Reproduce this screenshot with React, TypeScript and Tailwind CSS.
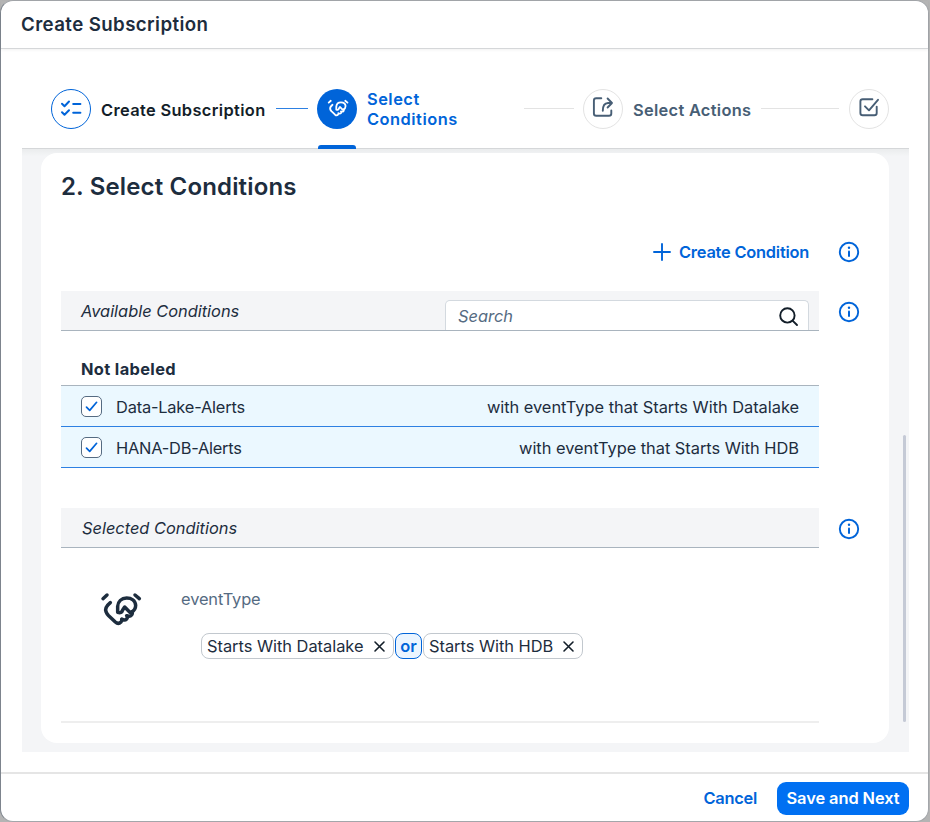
import type { ReactNode } from "react";

function Handshake({ size, stroke }: { size: number; stroke: number }) {
  return (
    <svg width={size} height={size} viewBox="0 0 180 180" fill="none" stroke="currentColor" strokeWidth={stroke} strokeLinecap="round" strokeLinejoin="round">
      <path d="M39 56 51 45M135 45 148 56" />
      <path d="M61 68C50 77 45 87 48 95Q50 101 56 107L76 126Q85 134 93 126Q97 122 95 117Q104 123 110 117Q114 112 110 107Q120 111 125 105Q128 101 126 95" />
      <path d="M124 97Q137 90 137 76C136 61 124 54 110 54C94 54 84 65 83 79V97Q95 101 98 90L104 81L121 98" />
    </svg>
  );
}

function ListIcon() {
  return (
    <svg width="22" height="18" viewBox="0 0 22 18" fill="none" stroke="currentColor" strokeWidth="2" strokeLinecap="round" strokeLinejoin="round">
      <path d="M2 4.7 4.5 7.2 9 2.5M2 13.3l2.5 2.5L9 11.2" />
      <path d="M13.2 5H20.4M13.2 13.8H20.4" />
    </svg>
  );
}

function ShareIcon() {
  return (
    <svg width="22" height="22" viewBox="0 0 22 22" fill="none" stroke="currentColor" strokeWidth="1.9" strokeLinecap="round" strokeLinejoin="round">
      <path d="M9.3 2.2H4.2Q1.9 2.2 1.9 4.5V17.4Q1.9 19.7 4.2 19.7H17Q19.3 19.7 19.3 17.4V14.4" />
      <path d="M15.6 2.5 20 7l-4.4 4.5M20 7H16Q10.8 7.3 10.8 14.8" />
    </svg>
  );
}

function CompleteIcon() {
  return (
    <svg width="22" height="22" viewBox="0 0 22 22" fill="none" stroke="currentColor" strokeWidth="1.9" strokeLinecap="round" strokeLinejoin="round">
      <path d="M14.4 3.3H4.7Q2.4 3.3 2.4 5.6V16.9Q2.4 19.2 4.7 19.2H16.4Q18.7 19.2 18.7 16.9V10.6" />
      <path d="M7 10.3l4 4L20 3.8" />
    </svg>
  );
}

function InfoIcon() {
  return (
    <svg width="22" height="22" viewBox="0 0 22 22" className="shrink-0 text-[#0064d9]" fill="none" stroke="currentColor" strokeWidth="1.9">
      <circle cx="11" cy="11" r="9.2" />
      <path d="M11 10.5v4.6" strokeWidth="2" strokeLinecap="round" />
      <circle cx="11" cy="6.8" r="1.2" fill="currentColor" stroke="none" />
    </svg>
  );
}

function Bubble({ className, children }: { className: string; children: ReactNode }) {
  return <div className={`flex size-10 shrink-0 items-center justify-center rounded-full ${className}`}>{children}</div>;
}

function ConditionRow({ name, rule, tracking }: { name: string; rule: string; tracking: string }) {
  return (
    <div className="flex h-[41px] items-center border-b border-[#2d80e2] bg-[#ebf8ff] px-5">
      <span className="flex size-[21px] items-center justify-center rounded-[5px] border border-[#556b82] bg-white">
        <svg width="15" height="15" viewBox="0 0 15 15" fill="none" stroke="#0064d9" strokeWidth="1.7" strokeLinecap="round" strokeLinejoin="round">
          <path d="M2.5 8.2 5.7 11.4 12.6 3.3" />
        </svg>
      </span>
      <span className={`ml-[14px] pt-[2px] ${tracking}`}>{name}</span>
      <span className="ml-auto pt-[2px] tracking-[-0.03px]">{rule}</span>
    </div>
  );
}

function Token({ text, width }: { text: string; width: string }) {
  return (
    <div className={`flex h-[26px] items-center justify-between rounded-[8px] border border-[#c2c8ce] bg-white pr-[7px] pl-[5px] ${width}`}>
      <span className="whitespace-nowrap tracking-[-0.02px]">{text}</span>
      <svg width="13" height="13" viewBox="0 0 13 13" fill="none" stroke="#131e29" strokeWidth="1.6" strokeLinecap="round">
        <path d="M2 2l9 9M11 2l-9 9" />
      </svg>
    </div>
  );
}

export default function App() {
  return (
    <div className="h-[822px] w-[930px] overflow-hidden bg-[#b4b4b4] font-['Inter','Liberation_Sans',sans-serif] text-[16.4px] leading-5 text-[#1d2d3e]">
      <div className="flex h-[822px] w-[929px] flex-col rounded-[13px] border border-[#a3a6aa] border-l-[#7d848d] bg-white">
        <header className="flex h-[48px] shrink-0 items-center border-b border-[#d5d7d9] pl-[20px] shadow-[0_1px_3px_rgba(0,0,0,0.06)]">
          <h1 className="text-[18.7px] font-semibold tracking-[0.4px]">Create Subscription</h1>
        </header>

        <nav className="mx-[20px] flex h-[99px] shrink-0 items-stretch pl-[30px] font-semibold">
          <div className="flex w-[266px] items-center pt-[20px]">
            <Bubble className="border border-[#0064d9] pb-[2px] text-[#0064d9]"><ListIcon /></Bubble>
            <span className="ml-2.5 pt-[2px] whitespace-nowrap text-[#131e29] tracking-[0.36px]">Create Subscription</span>
            <span className="ml-2.5 h-px w-8 bg-[#2d80e2]" />
          </div>
          <div className="relative flex w-[266px] items-center pt-[20px] text-[#0064d9]">
            <Bubble className="bg-[#0064d9] pb-px text-white"><Handshake size={31} stroke={10.5} /></Bubble>
            <span className="ml-2.5 w-[137px] tracking-[0.5px]">Select<br />Conditions</span>
            <span className="ml-5 h-px w-[50px] bg-[#e3e3e3]" />
            <span className="absolute bottom-[-1px] left-[1px] z-10 h-[4px] w-[38px] rounded-t-[3px] bg-[#0064d9]" />
          </div>
          <div className="flex w-[266px] items-center pt-[20px] text-[#475e75]">
            <Bubble className="border border-[#e3e3e3] pb-[4px]"><ShareIcon /></Bubble>
            <span className="ml-2.5 pt-[2px] whitespace-nowrap tracking-[0.3px]">Select Actions</span>
            <span className="ml-2.5 h-px w-[78px] bg-[#e3e3e3]" />
          </div>
          <div className="flex items-center pt-[20px] text-[#475e75]">
            <Bubble className="border border-[#e3e3e3] pb-[4px]"><CompleteIcon /></Bubble>
          </div>
        </nav>

        <main className="ml-[21px] flex h-[604px] w-[887px] shrink-0 border-t border-[#d5d7d9] bg-[linear-gradient(#eaeced,#f4f5f7_7px)] pt-[4px] pl-[19px]">
          <section className="h-[590px] w-[848px] rounded-[16px] bg-white pl-[20px]">
            <h2 className="pt-[20px] text-[24px] leading-7 font-semibold tracking-[0.16px]">2. Select Conditions</h2>

            <div className="mt-[40px] flex h-[22px] items-center pl-[591px] text-[#0064d9]">
              <svg width="20" height="20" viewBox="0 0 20 20" fill="none" stroke="currentColor" strokeWidth="1.9" strokeLinecap="round">
                <path d="M10 2v16M2 10h16" />
              </svg>
              <span className="ml-[7px] w-[130px] pb-px font-semibold whitespace-nowrap tracking-[-0.22px]">Create Condition</span>
              <span className="ml-[29px]"><InfoIcon /></span>
            </div>

            <div className="mt-[28px] flex items-center">
              <div className="flex h-[40px] w-[758px] justify-between border-b border-[#a9b4be] bg-[#f4f5f7] pr-[10px] pl-[20px]">
                <span className="pt-[10px] italic">Available Conditions</span>
                <div className="mt-[9px] flex w-[364px] items-center justify-between rounded-t-[5px] border border-b-0 border-[#d3d9df] bg-white pr-[9px] pl-[12px] text-[#556b82] italic">
                  <span className="pt-px">Search</span>
                  <svg className="mt-px" width="21" height="21" viewBox="0 0 21 21" fill="none" stroke="#131e29" strokeWidth="1.9" strokeLinecap="round">
                    <circle cx="9.4" cy="9.4" r="7.2" />
                    <path d="M14.8 14.8 19 19" />
                  </svg>
                </div>
              </div>
              <span className="ml-[19px] pt-px"><InfoIcon /></span>
            </div>

            <div className="w-[758px]">
              <div className="flex h-[55px] items-end border-b border-[#a9b4be] pb-[6px] pl-[20px] font-bold tracking-[0.36px]">Not labeled</div>
              <ConditionRow name="Data-Lake-Alerts" rule="with eventType that Starts With Datalake" tracking="tracking-[-0.19px]" />
              <ConditionRow name="HANA-DB-Alerts" rule="with eventType that Starts With HDB" tracking="tracking-[-0.22px]" />
            </div>

            <div className="mt-[40px] flex items-center">
              <div className="flex h-[40px] w-[758px] items-center border-b border-[#a9b4be] bg-[#f4f5f7] pl-[21px] italic">Selected Conditions</div>
              <span className="ml-[19px] pt-px"><InfoIcon /></span>
            </div>

            <div className="flex h-[175px] w-[758px] border-b-2 border-[#eeeeee] pl-[29px]">
              <div className="pt-[32px]"><Handshake size={60} stroke={10.5} /></div>
              <div className="ml-[31px] pt-[41px]">
                <p className="text-[#556b82] tracking-[-0.11px]">eventType</p>
                <div className="mt-[24px] ml-[20px] flex gap-px">
                  <Token text="Starts With Datalake" width="w-[193px]" />
                  <div className="flex h-[26px] w-[27px] items-center justify-center rounded-[8px] border border-[#0064d9] bg-[#ebf5ff] font-semibold text-[#0064d9]">or</div>
                  <Token text="Starts With HDB" width="w-[160px]" />
                </div>
              </div>
            </div>
          </section>
          <div className="mt-[282px] ml-[14px] h-[287px] w-[3px] rounded-full bg-[#c5cad6]" />
        </main>

        <footer className="mt-[20px] flex h-[50px] shrink-0 items-center justify-end border-t-2 border-[#e5e5e5] pr-[19px] font-semibold">
          <button className="mr-[20px] text-[#0064d9] tracking-[-0.25px]">Cancel</button>
          <button className="h-[33px] w-[132px] rounded-[9px] bg-[#0070f2] whitespace-nowrap text-white tracking-[-0.07px]">Save and Next</button>
        </footer>
      </div>
    </div>
  );
}
